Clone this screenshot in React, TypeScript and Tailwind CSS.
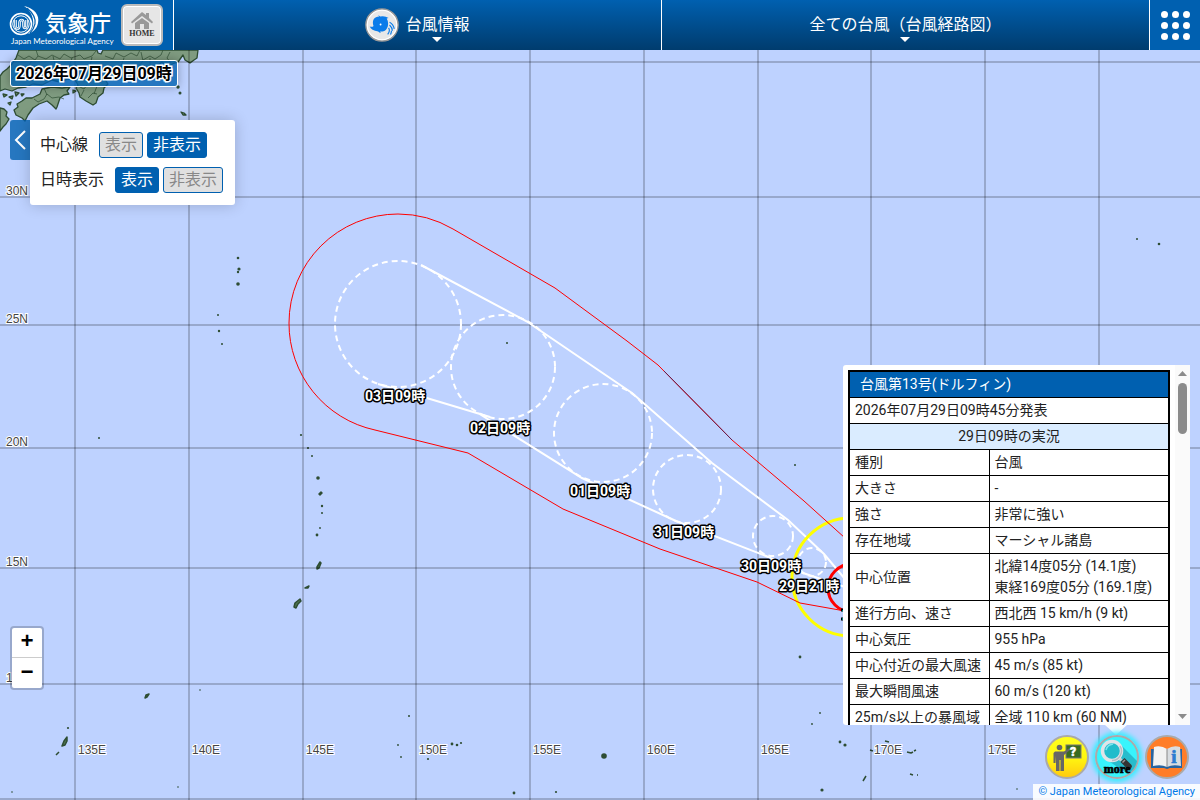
import { useState } from "react";

const LONGITUDES = [
  { x: 75, label: "135E" },
  { x: 189, label: "140E" },
  { x: 303, label: "145E" },
  { x: 416, label: "150E" },
  { x: 530, label: "155E" },
  { x: 644, label: "160E" },
  { x: 758, label: "165E" },
  { x: 871, label: "170E" },
  { x: 985, label: "175E" },
  { x: 1099, label: "" },
];

const LATITUDES = [
  { y: 62, label: "" },
  { y: 197, label: "30N" },
  { y: 325, label: "25N" },
  { y: 448, label: "20N" },
  { y: 568, label: "15N" },
  { y: 684, label: "10N" },
  { y: 799, label: "" },
];

const FORECASTS = [
  { cx: 398, cy: 324, r: 63, label: "03日09時", x: 365, y: 401 },
  { cx: 503, cy: 367, r: 52, label: "02日09時", x: 470, y: 433 },
  { cx: 603, cy: 433, r: 49, label: "01日09時", x: 570, y: 496 },
  { cx: 687, cy: 489, r: 34, label: "31日09時", x: 654, y: 537 },
  { cx: 773, cy: 536, r: 20, label: "30日09時", x: 741, y: 571 },
  { cx: 812, cy: 562, r: 14, label: "29日21時", x: 779, y: 591 },
];

// small islands: [x, y, radius]
const ISLETS = [
  [238, 258, 1.3], [239, 269, 1.6], [238, 272, 1.2], [238, 284, 1.8], [218, 315, 1], [219, 331, 1.2], [222, 344, 1],
  [99, 438, 1], [301, 435, 1.1], [308, 448, 1.1], [312, 456, 1], [318, 478, 1.8], [322, 506, 1.2], [322, 513, 1],
  [320, 528, 0.9], [317, 535, 1.4], [507, 343, 1], [795, 465, 1], [1137, 239, 1], [1159, 244, 1.3],
  [178, 87, 1.7], [180, 93, 1.5], [200, 690, 0.8], [68, 728, 1.1], [12, 792, 0.8], [409, 716, 1], [604, 756, 2.8],
  [452, 744, 1.4], [457, 745, 1.3], [461, 743, 1.1], [398, 745, 0.9], [401, 757, 0.9], [428, 759, 1.1],
  [800, 657, 1.4], [820, 713, 0.9], [812, 724, 0.9], [840, 742, 1.4], [845, 745, 1.6], [514, 793, 1.4],
  [556, 792, 1.1], [822, 790, 1.6], [1017, 789, 0.8], [178, 787, 0.8],
] as const;

const INFO_ROWS = [
  { name: "種別", value: ["台風"] },
  { name: "大きさ", value: ["-"] },
  { name: "強さ", value: ["非常に強い"] },
  { name: "存在地域", value: ["マーシャル諸島"] },
  { name: "中心位置", value: ["北緯14度05分 (14.1度)", "東経169度05分 (169.1度)"] },
  { name: "進行方向、速さ", value: ["西北西 15 km/h (9 kt)"] },
  { name: "中心気圧", value: ["955 hPa"] },
  { name: "中心付近の最大風速", value: ["45 m/s (85 kt)"] },
  { name: "最大瞬間風速", value: ["60 m/s (120 kt)"] },
  { name: "25m/s以上の暴風域", value: ["全域 110 km (60 NM)"] },
];

function Emblem() {
  return (
    <svg width="32" height="32" viewBox="0 0 32 32" fill="none" stroke="white" aria-hidden="true">
      <path d="M15 1c10 2 16 9 14 17-1 6-5 9-10 11 4-4 6-8 5-14-1-6-4-11-9-14z" fill="white" stroke="none" />
      <path d="M18 3c6 5 9 10 8 16-1 4-3 7-5 9" stroke="#0060b0" strokeWidth="1.2" />
      <circle cx="12" cy="19" r="10.5" fill="#0060b0" strokeWidth="1.6" />
      <circle cx="12" cy="19" r="8.2" strokeWidth="1" />
      <path d="M6.500 15v5c0 5 4 5 4 0v-2c0-4 4-4 4 0v2c0 4 3 4 3 0v-5" strokeWidth="2.600" />
      <path d="M6.500 15v5c0 5 4 5 4 0v-2c0-4 4-4 4 0v2c0 4 3 4 3 0v-5" stroke="#0060b0" strokeWidth="0.700" />
    </svg>
  );
}

function TyphoonIcon() {
  return (
    <svg width="34" height="34" viewBox="0 0 36 36" aria-hidden="true">
      <circle cx="18" cy="18" r="17" fill="#e8e8e8" stroke="#999" strokeWidth="1.600" />
      <circle cx="18" cy="18" r="15.600" fill="none" stroke="#fff" strokeWidth="1.200" />
      <path
        d="M5 19.500q3 1 4-.5C7 13 10 9 15 9q-1-1-1-1.500 1 1 2 1.500 5-1 9 1.500-2 0-2 .5c2 3 2 8 0 11-2 3-5 3-7 3q0 1 1 1.500-2 0-3-1.500c-5-1-8-3-9-5.500z"
        fill="#0a7cea"
      />
      <circle cx="16.500" cy="17.500" r="1" fill="#fff" />
      <path d="M26 15q4 2 5 7M26 18q3 3 3 6M25 21q2 3-1 7M28 24q0 2-1 4" fill="none" stroke="#0a7cea" strokeWidth="1.200" />
    </svg>
  );
}

function HelpIcon() {
  return (
    <svg width="44" height="44" viewBox="0 0 44 44" aria-hidden="true">
      <defs>
        <linearGradient id="helpFill" x1="0" y1="0" x2="0" y2="1">
          <stop offset="0" stopColor="#ffff20" />
          <stop offset="0.500" stopColor="#fff810" />
          <stop offset="1" stopColor="#ffc810" />
        </linearGradient>
      </defs>
      <circle cx="22" cy="22" r="21" fill="url(#helpFill)" stroke="#aaa" strokeWidth="2" />
      <rect x="21" y="10" width="15" height="13" fill="#3a6a20" stroke="#777" />
      <circle cx="14.500" cy="12.500" r="2.800" fill="#666" />
      <path d="M10 16.500h9l5-3 1 1.500-6 5v16h-3.500V25h-1v11H11V21l-.5 7H8.500V18z" fill="#666" />
      <text x="25" y="21" fontSize="12" fontWeight="900" fill="#fff" stroke="#fff" strokeWidth="0.500" fontFamily="Roboto, sans-serif">?</text>
    </svg>
  );
}

function MoreIcon() {
  return (
    <svg width="44" height="44" viewBox="0 0 44 44" aria-hidden="true">
      <circle cx="22" cy="22" r="21" fill="#38f4fc" stroke="#aaa" strokeWidth="2" />
      <path d="M25 9l17 17q-2 9-9 13L9 23z" fill="#28bccc" />
      <path d="M23.500 22.500l3 3" stroke="#ccc" strokeWidth="3" />
      <path d="M25.500 27l4-4 7 7q1 2-1 4-2 1-4-1z" fill="#333" />
      <path d="M27.500 27.500l2.500-2.500" stroke="#999" strokeWidth="1.500" />
      <circle cx="17" cy="16" r="9.500" fill="#22bccb" stroke="#e0e4e8" strokeWidth="3.500" />
      <path d="M17 25.500A9.500 9.500 0 0 0 25 11" fill="none" stroke="#b4bcc4" strokeWidth="1.500" />
      <path d="M11 15q1-5 7-6" fill="none" stroke="#7ce4ee" strokeWidth="1.500" />
      <text x="22" y="38" fontSize="12" fontWeight="900" textAnchor="middle" fill="#000" stroke="#000" strokeWidth="0.700" fontFamily="'Liberation Serif', serif">
        more
      </text>
    </svg>
  );
}

function GuideIcon() {
  return (
    <svg width="44" height="44" viewBox="0 0 44 44" aria-hidden="true">
      <circle cx="22" cy="22" r="21" fill="#ff7d28" stroke="#aaa" strokeWidth="2" />
      <path d="M6 14h31v19H25l-3 1-3-1H6z" fill="#2864a0" />
      <path d="M9 12q7-2 13 2v18q-6-3-14-1z" fill="#f2f2f2" />
      <path d="M35 12q-7-2-13 2v18q6-3 14-1z" fill="#d8dce0" />
      <path d="M22 14v18" stroke="#888" />
      <text x="29" y="28" fontSize="19" fontWeight="bold" textAnchor="middle" fill="#2c7cd0" stroke="#2c7cd0" strokeWidth="0.700" fontFamily="'Liberation Serif', serif">
        i
      </text>
    </svg>
  );
}

function Land() {
  return (
    <g fill="#7f9b80" stroke="#2e4d33" strokeWidth="1.300" strokeLinejoin="round">
      {/* Honshu */}
      <path d="M19 50L16 58 12 64 7 69 3 72 0 76V91L5 89 12 91 18 88 26 87 33 84 42 85 52 80 60 82 68 79 75 80 78 85 76 88 79 93 80 97 86 101 93 105 96 103 98 97 103 93 104 88 108 84 104 78 105 72 109 73 111 77 116 74 122 78 130 76 138 75 144 71 150 68 156 67 162 62 166 66 165 71 170 70 172 64 178 62 183 55 185 60 190 63 194 60 197 58 198 50H103L101 54 98 53 97 50z" />
      {/* Shikoku */}
      <path d="M42 89L40 94 32 98 26 98 22 101 17 104 18 107 14 110 16 115 22 118 25 121 28 115 33 108 39 104 47 101 52 105 56 109 57 107 60 98 64 95 69 94 67 91 70 87 62 88 52 87z" />
      {/* Kyushu */}
      <path d="M0 108L4 109 7 112 6 116 9 119 6 124 3 127 0 131z" />
      <path d="M3 94l4 1-3 2zM9 97l4-1-1 3zM15 92l4 1-3 3zM8 103l3-1-1 3zM21 94l3 0-2 2zM73 90l3 1-3 2z" />
      <path d="M181 112l3 1 2 2-3 0z" />
      <path
        d="M18 55l6 4 5-3 6 4 3-4-2-6M38 56l8 3 6-4 8 4 4-5 7 4 9-3 4 4 8-3 4-5M32 60l-4 7-9 4-7 8M53 56l2 9-6 7 2 8M72 58l-3 9 4 8M92 57l-2 9-6 6-3 8M105 56l8 3 3-6 8 4 7-4 6 3 3-6M124 58l-3 8 4 10M141 52l2 9-5 6M143 60l7-4 5 3 6-4 2-5M150 58l0 8M170 52l-3 6 4 5M34 99l4 3 6-3 3-5 5 4 7-1 5 2M44 88l3 7M78 86l6 3 3-4M84 90l-3 6M88 98l5-5 4 1M97 86l-3 8"
        fill="none"
        strokeWidth="0.700"
      />
    </g>
  );
}

function TyphoonMap() {
  return (
    <svg
      className="absolute inset-0 size-full"
      viewBox="0 50 1200 750"
      preserveAspectRatio="xMinYMin slice"
      role="img"
      aria-label="台風経路図"
    >
      <rect x="0" y="50" width="1200" height="750" fill="#bed2ff" />
      <Land />

      {/* Mariana, Palau and Micronesia islands */}
      <g fill="#4e7350" stroke="#2e4d33" strokeWidth="1.500" strokeLinejoin="round">
        <path d="M319 494l2-2 1 1-2 2zM317 567l3-5 1 1-2 5-2 1zM305 588l4-2-1 2zM294 607l1-4 5-4 1 2-3 3-2 4zM145 698l1-3 3-1-2 3zM62 746l2-5 3-4 0 4-2 4zM56 755l3-3M863 781l3-5M870 750l3 1M885 741l4 1M907 752l4 1 2-1M914 751l2-1M910 774l3 1M917 775h1" />
      </g>
      {ISLETS.map(([x, y, r]) => (
        <circle key={`${x}-${y}`} cx={x} cy={y} r={r} fill="#2e4d33" />
      ))}

      {/* graticule */}
      <g stroke="#000" strokeOpacity="0.2" strokeWidth="2">
        {LONGITUDES.map((l) => (
          <line key={l.x} x1={l.x} x2={l.x} y1="50" y2="800" />
        ))}
        {LATITUDES.map((l) => (
          <line key={l.y} x1="0" x2="1200" y1={l.y} y2={l.y} />
        ))}
      </g>
      <g className="font-['Liberation_Sans',sans-serif] text-xs" fill="#444" stroke="#fff" strokeWidth="2" paintOrder="stroke">
        {LONGITUDES.filter((l) => l.label).map((l) => (
          <text key={l.label} x={l.x + 3} y="754">{l.label}</text>
        ))}
        {LATITUDES.filter((l) => l.label).map((l) => (
          <text key={l.label} x="6" y={l.y - 2}>{l.label}</text>
        ))}
      </g>

      {/* forecast circles and the lines that wrap them */}
      <g fill="none" stroke="#fff" strokeWidth="2">
        {FORECASTS.map((f) => (
          <circle key={f.label} cx={f.cx} cy={f.cy} r={f.r} strokeDasharray="6 4" />
        ))}
        <path d="M421 265L528 322 532 325 632 393 712 463 788 520 824 554 845 579" />
        <path d="M378 384L420 396 490 417M478 413L582 478 676 521 766 556 800 572 845 587" />
      </g>

      <circle cx="851" cy="577" r="59" fill="none" stroke="#ff0" strokeWidth="3" />
      <path
        d="M845 538L804 501 732 440 658 365 627 341 555 288 453 229A109 109 0 0 0 398 214 109 109 0 0 0 289 323 109 109 0 0 0 375 430L468 453 563 509 660 549 757 582 800 603 845 611"
        fill="none"
        stroke="#f00"
        strokeWidth="1"
      />
      <path d="M664 371L732 440" stroke="#602050" strokeWidth="1" />
      <circle cx="852" cy="588" r="24" fill="none" stroke="#f00" strokeWidth="3" />
      <path d="M841 610h4M841 619h4" stroke="#000" strokeWidth="3" />
      <path d="M842 611h3M842 619h3" stroke="#0ff" strokeWidth="1" />

      <g
        className="font-[Roboto,'Noto_Sans_CJK_JP',sans-serif] text-sm font-bold"
        fill="#fff"
        stroke="#000"
        strokeWidth="3"
        strokeLinejoin="round"
        paintOrder="stroke"
      >
        {FORECASTS.map((f) => (
          <text key={f.label} x={f.x} y={f.y}>{f.label}</text>
        ))}
      </g>
    </svg>
  );
}

interface ToggleRowProps {
  title: string;
  shown: boolean;
  onChange: (shown: boolean) => void;
}

function ToggleRow({ title, shown, onChange }: ToggleRowProps) {
  const on = "border-[#0060b0] bg-[#0060b0] text-white";
  const off = "border-[#0060b0] bg-[#e0e0e0] text-[#888]";
  return (
    <div role="group" aria-label={title} className="flex items-center">
      <span className="mr-[11px]">{title}</span>
      <div className="flex gap-1">
        <button
          aria-pressed={shown}
          onClick={() => onChange(true)}
          className={`h-[26px] rounded-[3px] border px-[5px] leading-6 ${shown ? on : off}`}
        >
          表示
        </button>
        <button
          aria-pressed={!shown}
          onClick={() => onChange(false)}
          className={`h-[26px] rounded-[3px] border px-[5px] leading-6 ${shown ? off : on}`}
        >
          非表示
        </button>
      </div>
    </div>
  );
}

function MapSettings() {
  const [open, setOpen] = useState(true);
  const [centerLine, setCenterLine] = useState(false);
  const [dateLabels, setDateLabels] = useState(true);

  return (
    <div className="absolute top-[70px] left-[10px] flex items-start">
      <button
        aria-label="表示設定"
        aria-expanded={open}
        onClick={() => setOpen(!open)}
        className="flex h-10 w-5 items-center justify-center rounded-l-[3px] bg-[#0060b0]/80"
      >
        <svg width="12" height="20" viewBox="0 0 12 20" fill="none" stroke="#fff" strokeWidth="2">
          <path d="M11 1L2 10l9 9" />
        </svg>
      </button>
      {open && (
        <div className="flex flex-col gap-[9px] rounded-r-[3px] rounded-bl-[3px] bg-white py-3 pr-3 pl-[10px] shadow-[0_0_15px_rgba(0,0,0,0.2)]">
          <ToggleRow title="中心線" shown={centerLine} onChange={setCenterLine} />
          <ToggleRow title="日時表示" shown={dateLabels} onChange={setDateLabels} />
        </div>
      )}
    </div>
  );
}

function InfoPopup() {
  return (
    <section className="absolute right-[10px] bottom-[75px] w-[347px]">
      <div className="flex h-[360px] rounded-[3px] bg-white">
        <div className="flex-1 overflow-hidden pt-[5px] pl-[5px]">
          <table className="w-[322px] border-collapse border-2 border-black text-sm leading-[21px] text-[#222]">
            <tbody>
              <tr>
                <th colSpan={2} className="border border-black bg-[#0060b0] py-[2px] pr-[5px] pl-[10px] text-left font-normal text-white">
                  台風第13号(ドルフィン)
                </th>
              </tr>
              <tr>
                <td colSpan={2} className="border border-black px-[5px] py-[2px]">2026年07月29日09時45分発表</td>
              </tr>
              <tr>
                <th colSpan={2} className="border border-black bg-[#daecff] px-[5px] py-[2px] text-center font-normal">
                  29日09時の実況
                </th>
              </tr>
              {INFO_ROWS.map((row) => (
                <tr key={row.name}>
                  <th scope="row" className="w-[140px] border border-black px-[5px] py-[2px] text-left font-normal whitespace-nowrap">
                    {row.name}
                  </th>
                  <td className="border border-black px-[5px] py-[2px]">
                    {row.value.map((v) => (
                      <div key={v}>{v}</div>
                    ))}
                  </td>
                </tr>
              ))}
            </tbody>
          </table>
        </div>
        <div className="flex w-[15px] flex-col items-center justify-between bg-[#fafafa] py-[6px]" aria-hidden="true">
          <div className="flex flex-col items-center gap-[7px]">
            <svg width="9" height="5" viewBox="0 0 9 5" fill="#8b8b8b"><path d="M0 5L4.500 0 9 5z" /></svg>
            <div className="h-[51px] w-[9px] rounded-full bg-[#8b8b8b]" />
          </div>
          <svg width="9" height="5" viewBox="0 0 9 5" fill="#8b8b8b"><path d="M0 0h9L4.500 5z" /></svg>
        </div>
      </div>
      <svg className="absolute top-full right-[63px]" width="22" height="10" viewBox="0 0 22 10" fill="#fff" fillOpacity="0.9">
        <path d="M0 0h22L11 10z" />
      </svg>
    </section>
  );
}

function Caret() {
  return (
    <svg className="absolute top-full left-1/2 -translate-x-1/2" width="10" height="5" viewBox="0 0 10 5" fill="#fff">
      <path d="M0 0h10L5 5z" />
    </svg>
  );
}

export default function App() {
  return (
    <div className="flex h-screen flex-col overflow-hidden font-[Roboto,'Noto_Sans_CJK_JP',sans-serif] text-base text-[#222]">
      <header className="flex h-[50px] shrink-0 bg-[#0060b0] text-white">
        <div className="flex w-[174px] items-center justify-between border-r border-white pr-[10px] pl-[9px]">
          <a href="#jma" className="flex flex-col">
            <span className="flex items-center gap-1">
              <Emblem />
              <span className="font-['Noto_Sans_CJK_JP',sans-serif] text-[22px] leading-7 font-medium">気象庁</span>
            </span>
            <span className="pl-[2px] font-[Lato,sans-serif] text-[8px] leading-[8px] whitespace-nowrap">
              Japan Meteorological Agency
            </span>
          </a>
          <a
            href="#home"
            className="flex size-[42px] shrink-0 flex-col items-center justify-center rounded-[6px] border-2 border-[#bbb] bg-[#e6e6e6] text-[#333] ring-1 ring-white ring-inset"
          >
            <svg width="24" height="17" viewBox="0 0 24 17" fill="#999" aria-hidden="true">
              <path d="M12 0l4 3V1h3v5l4 4-1 1.500L12 4 2 11.500 1 10z" />
              <path d="M12 6l7 5v6h-5v-5h-4v5H5v-6z" />
            </svg>
            <span className="font-['Liberation_Serif',serif] text-[8px] leading-[10px] font-bold">HOME</span>
          </a>
        </div>
        <button aria-haspopup="menu" className="flex flex-1 items-center justify-center gap-[6px] border-r border-white bg-linear-to-b from-[#0060b0] to-[#003c6e]">
          <TyphoonIcon />
          <span className="relative">
            台風情報
            <Caret />
          </span>
        </button>
        <button aria-haspopup="menu" className="flex flex-1 items-center justify-center border-r border-white bg-linear-to-b from-[#0060b0] to-[#003c6e]">
          <span className="relative">
            全ての台風（台風経路図）
            <Caret />
          </span>
        </button>
        <button aria-label="メニュー" className="flex w-[50px] items-center justify-center">
          <span className="grid grid-cols-3 gap-1">
            {Array.from({ length: 9 }, (_, i) => (
              <span key={i} className="size-[7px] rounded-full bg-white" />
            ))}
          </span>
        </button>
      </header>

      <main className="relative flex-1 overflow-hidden">
        <TyphoonMap />

        <div className="absolute top-[10px] left-[10px] rounded-[3px] border border-white bg-[#0060b0]/80 px-[5px] leading-[25px] font-bold text-black shadow-[0_0_10px_rgba(0,0,0,0.3)] [-webkit-text-stroke:3px_white] [paint-order:stroke]">
          2026年07月29日09時
        </div>

        <MapSettings />

        <div className="absolute bottom-[110px] left-[10px] flex flex-col overflow-hidden rounded-[4px] border-2 border-black/20 bg-white bg-clip-padding font-['Liberation_Mono',monospace] text-[22px] font-bold text-black">
          <button aria-label="拡大" className="flex h-[30px] w-[30px] items-center justify-center border-b border-[#ccc]">+</button>
          <button aria-label="縮小" className="flex h-[30px] w-[30px] items-center justify-center">−</button>
        </div>

        <InfoPopup />

        <div className="absolute right-[11px] bottom-[21px] flex gap-[6px]">
          <button aria-label="使い方" className="rounded-full"><HelpIcon /></button>
          <button aria-label="詳細" className="rounded-full shadow-[0_0_5px_3px_#30f0ff]"><MoreIcon /></button>
          <button aria-label="解説" className="rounded-full"><GuideIcon /></button>
        </div>

        <a href="#copyright" className="absolute right-0 bottom-0 bg-white/90 px-[5px] text-[11px] leading-4 text-[#0078e8]">
          © Japan Meteorological Agency
        </a>
      </main>
    </div>
  );
}
